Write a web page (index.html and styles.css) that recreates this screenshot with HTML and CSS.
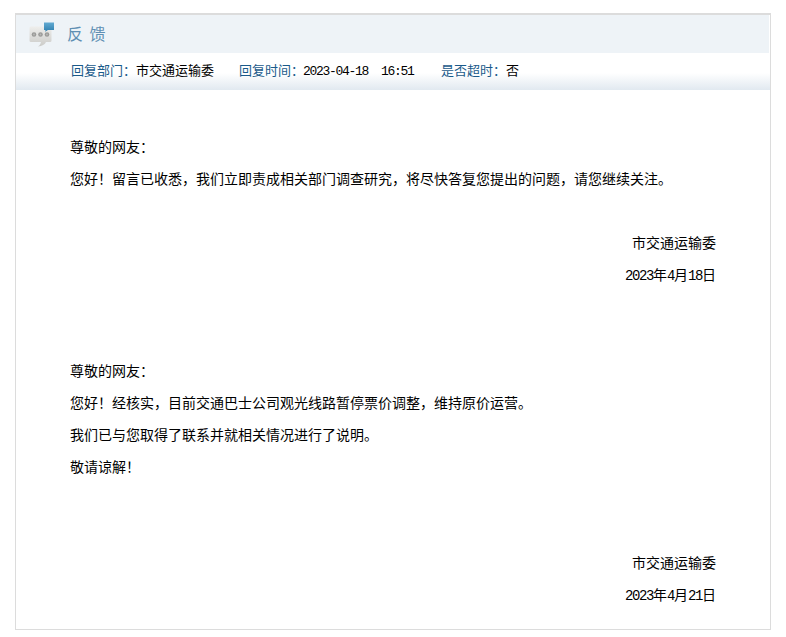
FILE: index.html
```html
<!DOCTYPE html>
<html lang="zh-CN">
<head>
<meta charset="utf-8">
<title>反馈</title>
<link rel="stylesheet" href="styles.css">
</head>
<body>
<div class="panel">
  <div class="title-bar">
    <svg class="title-icon" width="26" height="26" viewBox="0 0 26 26">
      <defs>
        <linearGradient id="bub" x1="0" y1="0" x2="0" y2="1">
          <stop offset="0" stop-color="#eeeeec"/>
          <stop offset="1" stop-color="#cbcbc8"/>
        </linearGradient>
        <linearGradient id="blue" x1="0" y1="0" x2="0" y2="1">
          <stop offset="0" stop-color="#62aad2"/>
          <stop offset="1" stop-color="#2f7fae"/>
        </linearGradient>
      </defs>
      <path d="M2 4.500h19a1.500 1.500 0 0 1 1.500 1.500v12.500a1.500 1.500 0 0 1-1.500 1.500h-4c-1 2.500-4 4-8 4.500 1.500-1 2.500-2.500 3-4.500H2a1.500 1.500 0 0 1-1.500-1.500V6A1.500 1.500 0 0 1 2 4.500z" fill="url(#bub)"/>
      <circle cx="5" cy="12.500" r="2.300" fill="#9a9a98"/>
      <circle cx="11.500" cy="12.500" r="2.300" fill="#9a9a98"/>
      <circle cx="18" cy="12.500" r="2.300" fill="#9a9a98"/>
      <circle cx="5" cy="12.500" r="0.900" fill="#b8b8b6"/>
      <circle cx="11.500" cy="12.500" r="0.900" fill="#b8b8b6"/>
      <circle cx="18" cy="12.500" r="0.900" fill="#b8b8b6"/>
      <path d="M15 .500h10v7.500h-6l-3 1.800.6-1.800H15z" fill="url(#blue)"/>
    </svg>
    <h1 class="title">反 馈</h1>
  </div>
  <div class="meta-bar">
    <span class="meta-item"><span class="meta-label">回复部门：</span>市交通运输委</span>
    <span class="meta-item"><span class="meta-label">回复时间：</span><span class="meta-date">2023-04-18&nbsp;&nbsp;16:51</span></span>
    <span class="meta-item"><span class="meta-label">是否超时：</span>否</span>
  </div>
  <div class="content">
    <p class="line">尊敬的网友：</p>
    <p class="line">您好！留言已收悉，我们立即责成相关部门调查研究，将尽快答复您提出的问题，请您继续关注。</p>
    <p class="line blank">&nbsp;</p>
    <p class="line right">市交通运输委</p>
    <p class="line right"><span class="num">2023</span>年<span class="num">4</span>月<span class="num">18</span>日</p>
    <p class="line blank">&nbsp;</p>
    <p class="line blank">&nbsp;</p>
    <p class="line">尊敬的网友：</p>
    <p class="line">您好！经核实，目前交通巴士公司观光线路暂停票价调整，维持原价运营。</p>
    <p class="line">我们已与您取得了联系并就相关情况进行了说明。</p>
    <p class="line">敬请谅解！</p>
    <p class="line blank">&nbsp;</p>
    <p class="line blank">&nbsp;</p>
    <p class="line right">市交通运输委</p>
    <p class="line right"><span class="num">2023</span>年<span class="num">4</span>月<span class="num">21</span>日</p>
  </div>
</div>
</body>
</html>
```
FILE: styles.css
```css
* { box-sizing: border-box; }
html, body { margin: 0; padding: 0; background: #fff; }
body {
  padding: 13px 15px 7px 15px;
  font-family: "Noto Sans CJK SC", "Liberation Sans", sans-serif;
  color: #000;
}
.panel {
  width: 756px;
  height: 617px;
  border: 1px solid #dcdcdc;
  border-top-width: 2px;
}
.title-bar {
  height: 38px;
  margin-right: 1px;
  background: #eef3f7;
  display: flex;
  align-items: center;
  padding-left: 13px;
}
.title-icon { display: block; margin-top: 1px; filter: blur(0.35px); }
.title {
  margin: -2px 0 0 12px;
  font-size: 16px;
  font-weight: normal;
  line-height: 38px;
  letter-spacing: 0.5px;
  color: #5f8fb3;
  word-spacing: 2px;
}
.meta-bar {
  height: 37px;
  background: linear-gradient(to bottom, #fff 0, #fff 20px, #e1e9f0 100%);
  display: flex;
  padding-left: 55px;
  padding-top: 8px;
  gap: 25px;
  font-size: 13px;
  line-height: 18px;
  white-space: nowrap;
}
.meta-label { color: #1a5a8a; }
.meta-date {
  font-family: "Liberation Mono", monospace;
  letter-spacing: -1.3px;
  margin-left: -1px;
  margin-right: 2.500px;
  line-height: 0;
}
.content {
  padding: 40px 54px 0 54px;
  font-size: 14px;
  line-height: 32px;
}
.line { margin: 0; white-space: nowrap; }
.right { text-align: right; }
.num {
  font-family: "Liberation Mono", monospace;
  letter-spacing: -1.4px;
  line-height: 0;
}
```
